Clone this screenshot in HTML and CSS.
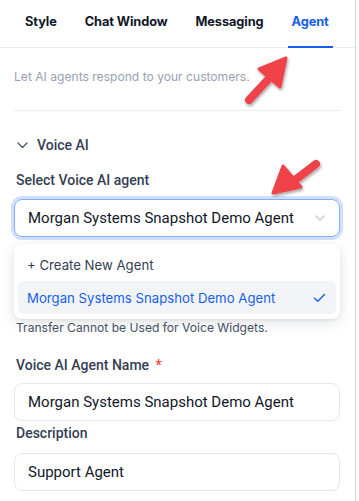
FILE: index.html
```html
<!DOCTYPE html>
<html lang="en">
<head>
  <meta charset="UTF-8">
  <title>Chat Widget – Agent</title>
  <link rel="stylesheet" href="styles.css">
</head>
<body>
  <div class="panel">
    <div class="tabs">
      <div class="tab">Style</div>
      <div class="tab">Chat Window</div>
      <div class="tab">Messaging</div>
      <div class="tab active">Agent</div>
    </div>

    <div class="content">
      <div class="intro">Let AI agents respond to your customers.</div>
      <div class="divider"></div>

      <div class="section-head">
        <svg class="chev" width="11" height="7" viewBox="0 0 11 7"><path d="M1 1l4.5 4.5L10 1" fill="none" stroke="#475467" stroke-width="1.3" stroke-linecap="round" stroke-linejoin="round"/></svg>
        <span>Voice AI</span>
      </div>

      <div class="label">Select Voice AI agent</div>
      <div class="select-wrap">
        <div class="select focused">
          <span>Morgan Systems Snapshot Demo Agent</span>
          <svg width="10" height="6" viewBox="0 0 10 6"><path d="M1 1l4 4 4-4" fill="none" stroke="#c4c9d2" stroke-width="1.2" stroke-linecap="round" stroke-linejoin="round"/></svg>
        </div>
        <div class="menu">
          <div class="menu-item">+ Create New Agent</div>
          <div class="menu-item selected">
            <span>Morgan Systems Snapshot Demo Agent</span>
            <svg width="13" height="10" viewBox="0 0 13 10"><path d="M1.5 5.2l3.3 3.1L11.5 1.5" fill="none" stroke="#155eef" stroke-width="1.4" stroke-linecap="round" stroke-linejoin="round"/></svg>
          </div>
        </div>
      </div>
      <div class="hint">Transfer Cannot be Used for Voice Widgets.</div>

      <div class="label label-gap">Voice AI Agent Name <span class="req">*</span></div>
      <div class="input">Morgan Systems Snapshot Demo Agent</div>

      <div class="label label-tight">Description</div>
      <div class="input input-low">Support Agent</div>
    </div>
  </div>

  <!-- annotation arrows -->
  <svg class="arrow arrow-tab" width="70" height="70" viewBox="0 0 70 70">
    <defs><filter id="sh1" x="-30%" y="-30%" width="160%" height="160%"><feDropShadow dx="1" dy="2" stdDeviation="1.5" flood-color="#000" flood-opacity="0.35"/></filter></defs>
    <g filter="url(#sh1)">
      <line x1="14" y1="55" x2="40" y2="27" stroke="#f0424a" stroke-width="8" stroke-linecap="round"/>
      <polygon points="51,13 45,42 24,24" fill="#f0424a" stroke="#f0424a" stroke-width="3" stroke-linejoin="round"/>
    </g>
  </svg>
  <svg class="arrow arrow-select" width="70" height="60" viewBox="0 0 70 60">
    <defs><filter id="sh2" x="-30%" y="-30%" width="160%" height="160%"><feDropShadow dx="1" dy="2" stdDeviation="1.5" flood-color="#000" flood-opacity="0.35"/></filter></defs>
    <g filter="url(#sh2)">
      <line x1="55" y1="14" x2="34" y2="30" stroke="#f0424a" stroke-width="8" stroke-linecap="round"/>
      <polygon points="12,43 22,16 40,37" fill="#f0424a" stroke="#f0424a" stroke-width="3" stroke-linejoin="round"/>
    </g>
  </svg>
</body>
</html>
```

FILE: styles.css
```css
body {
  margin: 0;
  background: #fff;
  font-family: Inter, "Noto Sans", sans-serif;
  color: #101828;
}
.panel {
  width: 355px;
  height: 501px;
  border-right: 1px solid #d0d5dd;
  overflow: hidden;
}
.tabs {
  display: flex;
  gap: 28px;
  padding: 0 0 0 25px;
  height: 47px;
  border-bottom: 1px solid #eaecf0;
}
.tab {
  font-size: 12.8px;
  font-weight: 700;
  color: #101828;
  padding-top: 14px;
  height: 33px;
  letter-spacing: -0.1px;
}
.tab.active {
  color: #155eef;
  border-bottom: 2px solid #155eef;
  height: 32px;
  margin-left: -4px;
  padding: 14px 4px 0;
}
.content {
  padding: 0 15px 0 14px;
}
.intro {
  font-size: 12.1px;
  color: #98a2b3;
  margin-top: 20px;
  line-height: 18px;
}
.divider {
  border-top: 1px solid #eaecf0;
  margin-top: 24px;
}
.section-head {
  display: flex;
  align-items: center;
  gap: 9px;
  margin-top: 24px;
  padding-left: 3px;
  font-family: Roboto, sans-serif;
  font-size: 14px;
  font-weight: 500;
  color: #344054;
  line-height: 20px;
}
.label {
  font-family: Roboto, sans-serif;
  font-size: 14px;
  font-weight: 500;
  color: #344054;
  line-height: 20px;
  padding-left: 2px;
  margin-top: 15px;
}
.label-gap {
  margin-top: 19px;
}
.label-tight {
  margin-top: 2px;
}
.req {
  color: #f04438;
  margin-left: 3px;
}
.select-wrap {
  position: relative;
  margin-top: 9px;
}
.select,
.input {
  display: flex;
  align-items: center;
  justify-content: space-between;
  height: 38px;
  box-sizing: border-box;
  border: 1px solid #e4e7ec;
  border-radius: 8px;
  padding: 0 14px 0 13px;
  font-family: Roboto, sans-serif;
  font-size: 15px;
  color: #101828;
}
.select.focused {
  border-color: #84adff;
  box-shadow: 0 0 0 3px #d1e0ff;
}
.input {
  margin-top: 8px;
}
.input-low {
  margin-top: 10px;
}
.menu {
  position: absolute;
  left: 0;
  right: 0;
  top: 45px;
  background: #fff;
  border-radius: 8px;
  box-shadow: 0 4px 14px rgba(16, 24, 40, 0.12), 0 1px 3px rgba(16, 24, 40, 0.06);
  padding: 4px 4px 5px;
  z-index: 2;
}
.menu-item {
  display: flex;
  align-items: center;
  justify-content: space-between;
  height: 33px;
  padding: 0 10px 0 9px;
  font-size: 13.2px;
  color: #344054;
  border-radius: 6px;
}
.menu-item.selected {
  background: #f2f4f7;
  color: #155eef;
}
.hint {
  font-size: 12.1px;
  color: #475467;
  margin-top: 83px;
  padding-left: 2px;
  line-height: 16px;
}
.arrow {
  position: absolute;
  z-index: 5;
}
.arrow-tab {
  left: 235px;
  top: 45px;
}
.arrow-select {
  left: 261px;
  top: 150px;
}
```
